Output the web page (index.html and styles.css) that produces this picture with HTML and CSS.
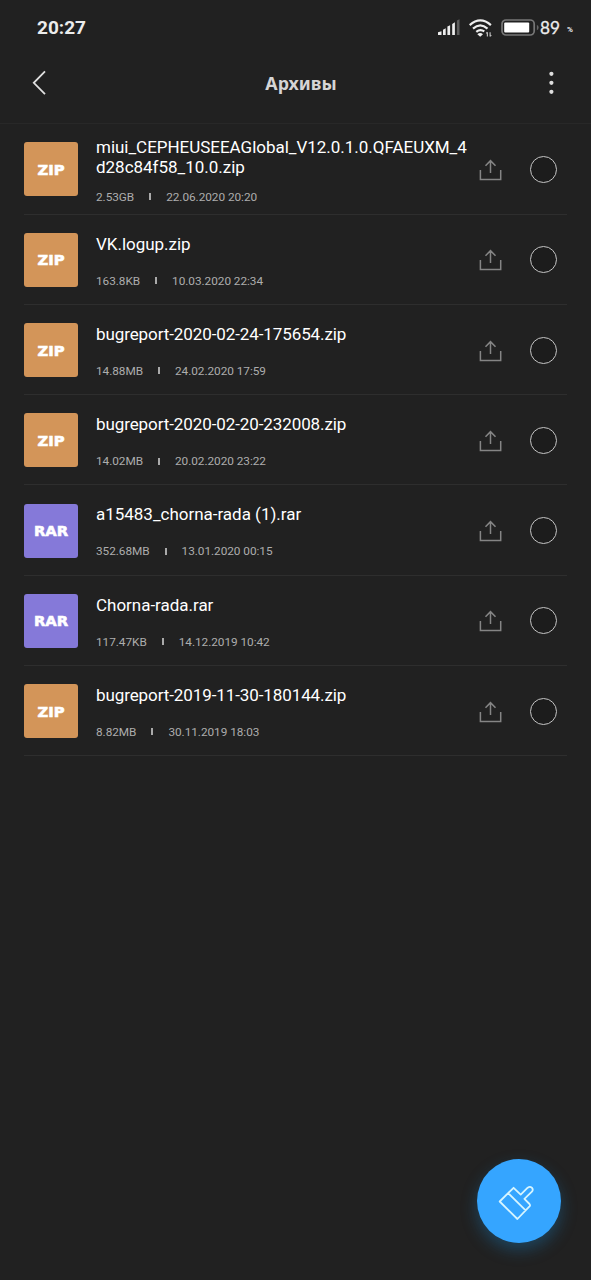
FILE: index.html
```html
<!DOCTYPE html>
<html lang="ru">
<head>
<meta charset="utf-8">
<title>Архивы</title>
<link rel="stylesheet" href="styles.css">
</head>
<body>
<svg class="defs" aria-hidden="true">
  <symbol id="share" viewBox="0 0 24 24">
    <path d="M2.4 11v9.6h20.3V11M12.5 14V1.6M7.5 6.7l5-5.1 5 5.1"/>
  </symbol>
</svg>
<div class="screen">
  <div class="status">
    <span class="clock">20:27</span>
    <div class="indicators">
      <svg class="signal" viewBox="0 0 23 17">
        <path d="M0 16v-2.7l3.5-1V16zM5 16v-5.3l2.7-1.4V16zM9.4 16V7.6l2.7-1.3V16zM14.2 16V5l2.7-1.7V16z"/>
        <path class="dim" d="M18.9 16V1.4L21.5.2V16z"/>
      </svg>
      <svg class="wifi" viewBox="0 0 24 18">
        <path class="arc" d="M.7 6.1Q11.3-3.2 21.9 6.1M4 9.6Q11.3 3.1 18.5 9.6M7.3 12.8Q11.3 9.5 15.3 12.4"/>
        <path d="M8.3 15.2Q11.3 12.8 14 15.2L11.2 17.8z"/>
        <path class="traffic" d="M18.4 17.4v-4.2m-1.2 1.2 1.2-1.2M21.1 13.2v4.2m1.2-1.2-1.2 1.2"/>
      </svg>
      <svg class="battery" viewBox="0 0 39 18">
        <rect class="case" x="1" y="1" width="32.2" height="15" rx="4"/>
        <rect class="charge" x="3.2" y="3.4" width="25" height="10" rx="1"/>
        <path class="cap" d="M35.9 6q1.7.2 1.7 2.6t-1.7 2.6z"/>
      </svg>
      <span class="level">89</span><span class="percent">%</span>
    </div>
  </div>
  <header class="header">
    <svg class="back" viewBox="0 0 16 26"><path d="M14 1.4 2.8 12.8 14 24.2"/></svg>
    <h1 class="title">Архивы</h1>
    <svg class="more" viewBox="0 0 6 24"><circle cx="3.4" cy="2.8" r="2.1"/><circle cx="3.4" cy="11.8" r="2.1"/><circle cx="3.4" cy="20.8" r="2.1"/></svg>
  </header>
  <main class="list">
    <div class="row tall">
      <div class="badge zip">ZIP</div>
      <div class="info"><div class="name">miui_CEPHEUSEEAGlobal_V12.0.1.0.QFAEUXM_4<br>d28c84f58_10.0.zip</div><div class="meta"><span>2.53GB</span><i class="bar"></i><span>22.06.2020 20:20</span></div></div>
      <svg class="share"><use href="#share"/></svg><span class="check"></span>
    </div>
    <div class="row">
      <div class="badge zip">ZIP</div>
      <div class="info"><div class="name">VK.logup.zip</div><div class="meta"><span>163.8KB</span><i class="bar"></i><span>10.03.2020 22:34</span></div></div>
      <svg class="share"><use href="#share"/></svg><span class="check"></span>
    </div>
    <div class="row">
      <div class="badge zip">ZIP</div>
      <div class="info"><div class="name digits">bugreport-2020-02-24-175654.zip</div><div class="meta"><span>14.88MB</span><i class="bar"></i><span>24.02.2020 17:59</span></div></div>
      <svg class="share"><use href="#share"/></svg><span class="check"></span>
    </div>
    <div class="row">
      <div class="badge zip">ZIP</div>
      <div class="info"><div class="name digits">bugreport-2020-02-20-232008.zip</div><div class="meta"><span>14.02MB</span><i class="bar"></i><span>20.02.2020 23:22</span></div></div>
      <svg class="share"><use href="#share"/></svg><span class="check"></span>
    </div>
    <div class="row">
      <div class="badge rar">RAR</div>
      <div class="info"><div class="name">a15483_chorna-rada (1).rar</div><div class="meta"><span>352.68MB</span><i class="bar"></i><span>13.01.2020 00:15</span></div></div>
      <svg class="share"><use href="#share"/></svg><span class="check"></span>
    </div>
    <div class="row">
      <div class="badge rar">RAR</div>
      <div class="info"><div class="name">Chorna-rada.rar</div><div class="meta"><span>117.47KB</span><i class="bar"></i><span>14.12.2019 10:42</span></div></div>
      <svg class="share"><use href="#share"/></svg><span class="check"></span>
    </div>
    <div class="row">
      <div class="badge zip">ZIP</div>
      <div class="info"><div class="name digits">bugreport-2019-11-30-180144.zip</div><div class="meta"><span>8.82MB</span><i class="bar"></i><span>30.11.2019 18:03</span></div></div>
      <svg class="share"><use href="#share"/></svg><span class="check"></span>
    </div>
  </main>
  <button class="clean" aria-label="Очистка">
    <svg viewBox="0 0 38 38"><path d="M1.7 18.5 15.6 4.8l7.1 6.8 7-6.9q2.2-1.7 4.1-.1 1.8 2 .1 4.1l-7.5 7.1 5.1 5.2q1.1 1.2 0 2.4L19.4 36zM10.2 10.2 27.9 27.7"/></svg>
  </button>
</div>
</body>
</html>
```

FILE: styles.css
```css
* { box-sizing: border-box; }
body { margin: 0; background: #212121; font-family: Roboto, "Noto Sans", sans-serif; }
.defs { position: absolute; width: 0; height: 0; }
.screen { position: relative; width: 591px; height: 1280px; overflow: hidden; background: #212121; }
.status { display: flex; justify-content: space-between; align-items: center; height: 56px; padding: 0 18px 0 37px; color: #ececec; }
.clock { font-size: 19px; font-weight: 700; line-height: 22px; }
.indicators { display: flex; align-items: center; }
.signal { width: 23px; height: 17px; margin: -1px 8px 0 0; fill: #eee; }
.signal .dim { fill: #5c5c5c; }
.wifi { width: 24px; height: 18px; margin-right: 8px; fill: #eee; }
.wifi .arc { fill: none; stroke: #eee; stroke-width: 2.2; }
.wifi .traffic { fill: none; stroke: #bbb; stroke-width: 1.2; }
.battery { width: 39px; height: 18px; }
.battery .case { fill: none; stroke: #777; stroke-width: 1.7; }
.battery .charge { fill: #fff; }
.battery .cap { fill: #666; }
.level { width: 27px; font-family: Lato, sans-serif; font-size: 17.2px; line-height: 20px; -webkit-text-stroke: .3px #ececec; }
.percent { width: 6px; font-size: 8px; font-weight: 700; line-height: 8px; margin-top: 4px; }
.header { display: flex; align-items: center; justify-content: space-between; height: 68px; padding: 0 37px 14px 31px; border-bottom: 1px solid #282828; }
.back { width: 16px; height: 26px; fill: none; stroke: #e0e0e0; stroke-width: 1.8; }
.title { margin: 0 0 0 7px; font-family: "Noto Sans", sans-serif; font-size: 17.8px; font-weight: 700; line-height: 24px; color: #d5d5d5; }
.more { width: 6px; height: 24px; fill: #dedede; }
.list { padding: 0 24px; }
.row { display: flex; align-items: center; height: 90.25px; padding-top: 1.4px; border-bottom: 1px solid #2e2e2e; }
.row.tall { height: 90.5px; }
.badge { flex: none; display: grid; place-items: center; width: 54px; height: 54px; border-radius: 3px; font-family: "DejaVu Sans", sans-serif; font-size: 14.8px; font-weight: 700; color: #fff; -webkit-text-stroke: .6px #fff; }
.zip { background: #d39559; }
.rar { background: #8579d9; }
.info { flex: 1; min-width: 0; margin-left: 18px; padding-top: 1.4px; }
.name { height: 20px; font-size: 17px; line-height: 20px; letter-spacing: -.02px; color: #fff; white-space: nowrap; }
.name.digits { letter-spacing: -.095px; }
.meta { display: flex; align-items: center; height: 14px; margin-top: 20px; font-size: 11.8px; line-height: 14px; letter-spacing: -.04px; color: #adadad; white-space: nowrap; }
.tall .name { height: 40px; }
.tall .meta { margin-top: 13px; }
.bar { width: 2px; height: 7px; margin: 0 15px; background: #aaa; }
.share { flex: none; width: 24px; height: 24px; margin: 3px 28px 0 0; fill: none; stroke: #858585; stroke-width: 1.5; }
.check { flex: none; width: 27px; height: 27px; margin: 0 10px 0 0; border: 1.4px solid #c5c5c5; border-radius: 50%; background: #1c1c1c; }
.clean { position: absolute; left: 477px; top: 1159px; display: grid; place-items: center; width: 84px; height: 84px; padding: 2px 0 0; border: 0; border-radius: 50%; background: #35a5ff; box-shadow: 0 7px 16px rgba(24, 130, 200, .36); }
.clean svg { width: 38px; height: 38px; margin-right: 4px; fill: none; stroke: #d6f5ff; stroke-width: 1.8; stroke-linejoin: round; }
```
